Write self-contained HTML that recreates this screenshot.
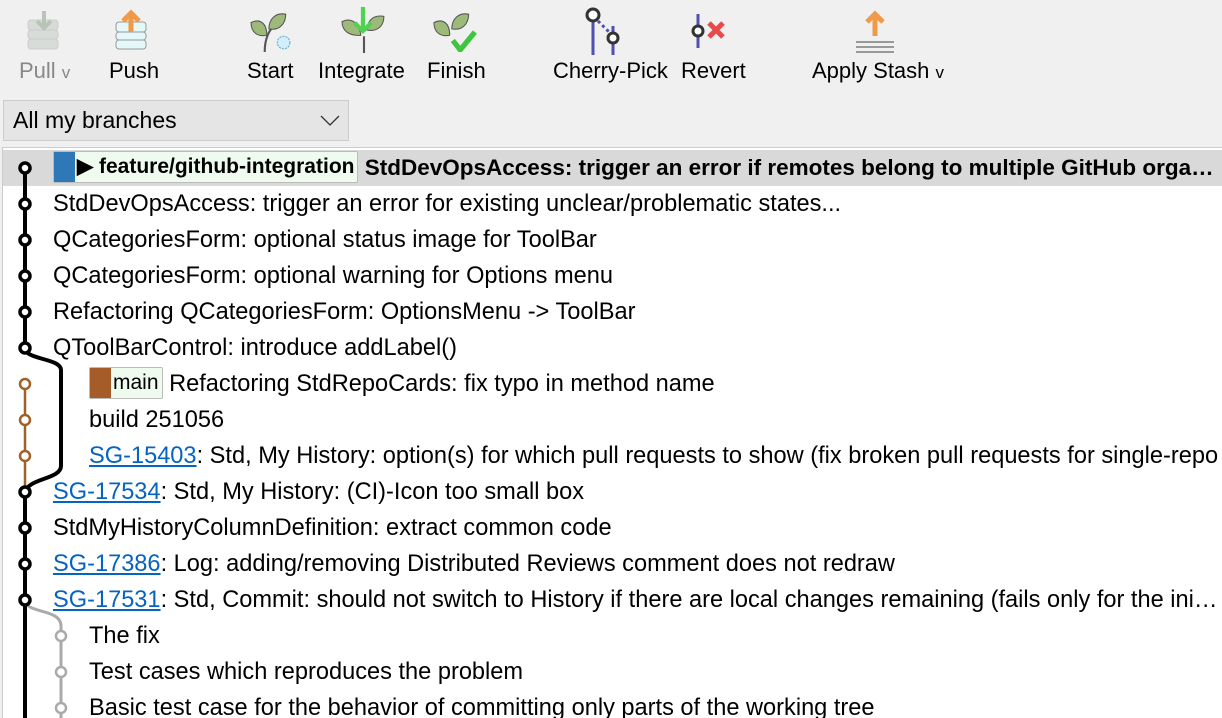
<!DOCTYPE html>
<html><head><meta charset="utf-8"><style>
*{margin:0;padding:0;box-sizing:border-box}
body{width:1222px;height:718px;overflow:hidden;background:#f0f0f0;font-family:"Liberation Sans",sans-serif;color:#000;position:relative}
.tb{position:absolute;top:58px;font-size:22px;white-space:nowrap}
.ic{position:absolute}
#dd{position:absolute;left:3px;top:100px;width:346px;height:41px;background:#e5e5e5;border:1px solid #ccc;font-size:23px;padding:6px 0 0 9px}
#list{position:absolute;left:2px;top:147px;width:1220px;height:571px;background:#fff;border-left:1px solid #ccc;border-top:1px solid #ccc;overflow:hidden}
.r{position:absolute;left:0;height:36px;font-size:23.6px;white-space:nowrap;line-height:36px;overflow:hidden;text-overflow:ellipsis;right:0}
a{color:#0563c1;text-decoration:underline}
.tag{display:inline-block;height:32px;line-height:30px;border:1px solid #bbb;border-radius:2px;background:#effbef;vertical-align:middle;position:relative;top:-2px;padding-right:3px;font-size:21px}
.tag i{display:inline-block;width:21px;height:30px;vertical-align:top;margin-right:2px}
</style></head><body>
<svg class="ic" style="left:26px;top:8px" width="36" height="44"><rect x="2" y="12" width="30" height="10" rx="3" fill="#d8dcd8" stroke="#ccc"/><rect x="2" y="22" width="30" height="9" rx="3" fill="#d8dcd8" stroke="#ccc"/><rect x="2" y="31" width="30" height="10" rx="3" fill="#d8dcd8" stroke="#ccc"/><path d="M18 3v16M11 13l7 7 7-7" stroke="#b8c4b8" stroke-width="4" fill="none"/></svg>
<svg class="ic" style="left:114px;top:8px" width="36" height="44"><rect x="2" y="14" width="30" height="10" rx="3" fill="#e4f8fa" stroke="#999"/><rect x="2" y="24" width="30" height="8" rx="3" fill="#e4f8fa" stroke="#999"/><rect x="2" y="32" width="30" height="9" rx="3" fill="#e4f8fa" stroke="#999"/><path d="M17 24V6M9 13l8-8 8 8" stroke="#f09a48" stroke-width="5" fill="none"/></svg>
<svg class="ic" style="left:248px;top:10px" width="46" height="42" viewBox="0 0 40 40"><path d="M14 40c0-12 4-22 12-28" stroke="#555" stroke-width="2" fill="none"/><path d="M1 12c8-4 15 0 15 12C7 26 1 21 1 12z" fill="#9dba7a" stroke="#555"/><path d="M18 18c0-9 6-16 16-14 0 9-6 16-16 14z" fill="#9dba7a" stroke="#555"/><circle cx="32" cy="31" r="6" fill="#cfefff" stroke="#6ab" stroke-dasharray="2 1"/></svg>
<svg class="ic" style="left:340px;top:7px" width="48" height="46" viewBox="0 0 44 44"><path d="M22 44V28" stroke="#555" stroke-width="2"/><path d="M1 14c8-4 16 0 18 13C8 28 1 23 1 14z" fill="#9dba7a" stroke="#555"/><path d="M25 22c0-9 6-15 16-13 0 9-6 15-16 13z" fill="#9dba7a" stroke="#555"/><path d="M21 0v22M13 15l8 8 8-8" stroke="#4fd24f" stroke-width="4" fill="none"/></svg>
<svg class="ic" style="left:432px;top:10px" width="48" height="42" viewBox="0 0 44 40"><path d="M1 12c8-4 15 0 15 12C7 26 1 21 1 12z" fill="#9dba7a" stroke="#555"/><path d="M18 18c0-9 6-16 16-14 0 9-6 16-16 14z" fill="#9dba7a" stroke="#555"/><path d="M19 29l7 9 14-17" stroke="#3ec63e" stroke-width="5" fill="none"/></svg>
<svg class="ic" style="left:584px;top:5px" width="50" height="50"><path d="M9 17v36M29 21v32" stroke="#5050b0" stroke-width="3"/><path d="M14 16l14 14" stroke="#5050b0" stroke-width="3" stroke-dasharray="3 3"/><circle cx="9" cy="10" r="6" fill="#fff" stroke="#333" stroke-width="3"/><circle cx="29" cy="33" r="5" fill="#fff" stroke="#333" stroke-width="3"/></svg>
<svg class="ic" style="left:690px;top:12px" width="44" height="36"><path d="M8 2v34" stroke="#5050b0" stroke-width="3"/><circle cx="8" cy="19" r="5" fill="#fff" stroke="#333" stroke-width="3"/><path d="M19 11l14 14M33 11L19 25" stroke="#e84a4a" stroke-width="5"/></svg>
<svg class="ic" style="left:853px;top:10px" width="44" height="44"><path d="M22 26V4M14 12l8-8 8 8" stroke="#f09a48" stroke-width="5" fill="none"/><path d="M3 32h38M3 37h38M3 42h38" stroke="#999" stroke-width="2"/></svg>
<div class="tb" style="left:19px;color:#888">Pull <span style="font-size:17px">v</span></div>
<div class="tb" style="left:109px">Push</div>
<div class="tb" style="left:247px">Start</div>
<div class="tb" style="left:318px">Integrate</div>
<div class="tb" style="left:427px">Finish</div>
<div class="tb" style="left:553px">Cherry-Pick</div>
<div class="tb" style="left:681px">Revert</div>
<div class="tb" style="left:812px">Apply Stash <span style="font-size:17px">v</span></div>
<div id="dd">All my branches<svg style="position:absolute;left:316px;top:14px" width="20" height="12"><path d="M1 1l9 9 9-9" stroke="#333" fill="none" stroke-width="1.3"/></svg></div>
<div id="list">
<div style="position:absolute;left:0;top:2px;width:1220px;height:36px;background:#d9d9d9"></div>
<svg style="position:absolute;left:0;top:0" width="80" height="571">
<path d="M22 20V200C22 212 58 210 58 222V318C58 332 22 330 22 346V571" stroke="#000" stroke-width="4" fill="none"/>
<path d="M22 236V338" stroke="#a0602a" stroke-width="2.5"/>
<path d="M22 452C22 466 58 460 58 478V571" stroke="#aaa" stroke-width="3" fill="none"/>
<g fill="#fff" stroke="#000" stroke-width="3.5">
<circle cx="22" cy="20" r="5"/><circle cx="22" cy="56" r="5"/><circle cx="22" cy="92" r="5"/><circle cx="22" cy="128" r="5"/><circle cx="22" cy="164" r="5"/><circle cx="22" cy="200" r="5"/><circle cx="22" cy="344" r="5"/><circle cx="22" cy="380" r="5"/><circle cx="22" cy="416" r="5"/><circle cx="22" cy="452" r="5"/></g>
<g fill="#fff" stroke="#a0602a" stroke-width="2.5"><circle cx="22" cy="236" r="5"/><circle cx="22" cy="272" r="5"/><circle cx="22" cy="308" r="5"/></g>
<g fill="#fff" stroke="#aaa" stroke-width="2.5"><circle cx="58" cy="488" r="5"/><circle cx="58" cy="524" r="5"/><circle cx="58" cy="560" r="5"/></g>
</svg>
<div class="r" style="top:2px;left:50px;font-weight:bold;font-size:22.5px"><span class="tag"><i style="background:#2f78b8"></i>▶ feature/github-integration</span> StdDevOpsAccess: trigger an error if remotes belong to multiple GitHub organizations</div>
<div class="r" style="top:38px;left:50px">StdDevOpsAccess: trigger an error for existing unclear/problematic states...</div>
<div class="r" style="top:74px;left:50px">QCategoriesForm: optional status image for ToolBar</div>
<div class="r" style="top:110px;left:50px">QCategoriesForm: optional warning for Options menu</div>
<div class="r" style="top:146px;left:50px">Refactoring QCategoriesForm: OptionsMenu -&gt; ToolBar</div>
<div class="r" style="top:182px;left:50px">QToolBarControl: introduce addLabel()</div>
<div class="r" style="top:218px;left:86px"><span class="tag"><i style="background:#a65c28"></i>main</span> Refactoring StdRepoCards: fix typo in method name</div>
<div class="r" style="top:254px;left:86px">build 251056</div>
<div class="r" style="top:290px;left:86px"><a>SG-15403</a>: Std, My History: option(s) for which pull requests to show (fix broken pull requests for single-repo</div>
<div class="r" style="top:326px;left:50px"><a>SG-17534</a>: Std, My History: (CI)-Icon too small box</div>
<div class="r" style="top:362px;left:50px">StdMyHistoryColumnDefinition: extract common code</div>
<div class="r" style="top:398px;left:50px"><a>SG-17386</a>: Log: adding/removing Distributed Reviews comment does not redraw</div>
<div class="r" style="top:434px;left:50px"><a>SG-17531</a>: Std, Commit: should not switch to History if there are local changes remaining (fails only for the initial</div>
<div class="r" style="top:470px;left:86px">The fix</div>
<div class="r" style="top:506px;left:86px">Test cases which reproduces the problem</div>
<div class="r" style="top:542px;left:86px">Basic test case for the behavior of committing only parts of the working tree</div>
</div>
</body></html>
